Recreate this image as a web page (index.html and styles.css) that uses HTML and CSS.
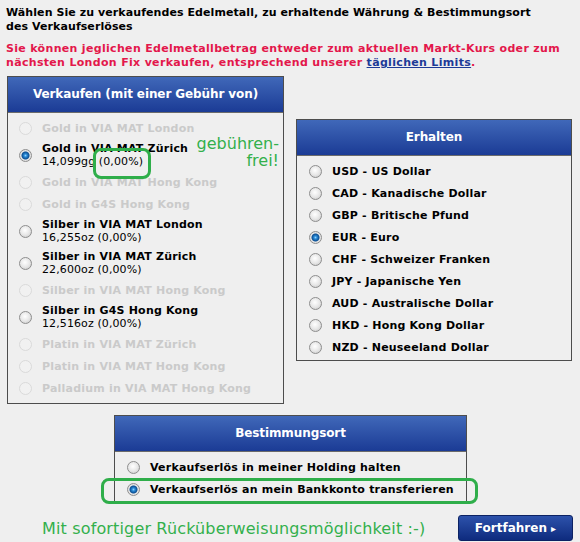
FILE: index.html
```html
<!DOCTYPE html>
<html lang="de">
<head>
<meta charset="UTF-8">
<meta name="viewport" content="width=device-width, initial-scale=1.0">
<title>Verkaufen</title>
<link rel="stylesheet" href="styles.css">
</head>
<body>
    <div class="page">
        <h1 class="intro">Wählen Sie zu verkaufendes Edelmetall, zu erhaltende Währung &amp; Bestimmungsort<br>des Verkaufserlöses</h1>
        <p class="warn">Sie können jeglichen Edelmetallbetrag entweder zum aktuellen Markt-Kurs oder zum<br>nächsten London Fix verkaufen, entsprechend unserer <a href="#">täglichen Limits</a>.</p>

        <div class="columns">
            <div class="box box_metal">
                <h2 class="box_head">Verkaufen (mit einer Gebühr von)</h2>
                <ul class="options">
                    <li class="off"><input type="radio" name="metal" disabled><label>Gold in VIA MAT London</label></li>
                    <li><input type="radio" name="metal" id="m2" checked><label for="m2">Gold in VIA MAT Zürich<span class="amount">14,099gg (0,00%)</span></label></li>
                    <li class="off"><input type="radio" name="metal" disabled><label>Gold in VIA MAT Hong Kong</label></li>
                    <li class="off"><input type="radio" name="metal" disabled><label>Gold in G4S Hong Kong</label></li>
                    <li><input type="radio" name="metal" id="m5"><label for="m5">Silber in VIA MAT London<span class="amount">16,255oz (0,00%)</span></label></li>
                    <li><input type="radio" name="metal" id="m6"><label for="m6">Silber in VIA MAT Zürich<span class="amount">22,600oz (0,00%)</span></label></li>
                    <li class="off"><input type="radio" name="metal" disabled><label>Silber in VIA MAT Hong Kong</label></li>
                    <li><input type="radio" name="metal" id="m8"><label for="m8">Silber in G4S Hong Kong<span class="amount">12,516oz (0,00%)</span></label></li>
                    <li class="off"><input type="radio" name="metal" disabled><label>Platin in VIA MAT Zürich</label></li>
                    <li class="off"><input type="radio" name="metal" disabled><label>Platin in VIA MAT Hong Kong</label></li>
                    <li class="off"><input type="radio" name="metal" disabled><label>Palladium in VIA MAT Hong Kong</label></li>
                </ul>
                <div class="note_free">gebühren-<br>frei!</div>
                <div class="ring ring_fee"></div>
            </div>

            <div class="box box_currency">
                <h2 class="box_head">Erhalten</h2>
                <ul class="options">
                    <li><input type="radio" name="cur" id="c1"><label for="c1">USD - US Dollar</label></li>
                    <li><input type="radio" name="cur" id="c2"><label for="c2">CAD - Kanadische Dollar</label></li>
                    <li><input type="radio" name="cur" id="c3"><label for="c3">GBP - Britische Pfund</label></li>
                    <li><input type="radio" name="cur" id="c4" checked><label for="c4">EUR - Euro</label></li>
                    <li><input type="radio" name="cur" id="c5"><label for="c5">CHF - Schweizer Franken</label></li>
                    <li><input type="radio" name="cur" id="c6"><label for="c6">JPY - Japanische Yen</label></li>
                    <li><input type="radio" name="cur" id="c7"><label for="c7">AUD - Australische Dollar</label></li>
                    <li><input type="radio" name="cur" id="c8"><label for="c8">HKD - Hong Kong Dollar</label></li>
                    <li><input type="radio" name="cur" id="c9"><label for="c9">NZD - Neuseeland Dollar</label></li>
                </ul>
            </div>
        </div>

        <div class="box box_dest">
            <h2 class="box_head">Bestimmungsort</h2>
            <ul class="options">
                <li><input type="radio" name="dest" id="d1"><label for="d1">Verkaufserlös in meiner Holding halten</label></li>
                <li><input type="radio" name="dest" id="d2" checked><label for="d2">Verkaufserlös an mein Bankkonto transferieren</label></li>
            </ul>
            <div class="ring ring_bank"></div>
        </div>

        <div class="footer">
            <p class="note_refund">Mit sofortiger Rücküberweisungsmöglichkeit :-)</p>
            <button type="button" class="btn_next">Fortfahren <span class="arrow">&#9656;</span></button>
        </div>
    </div>
</body>
</html>
```

FILE: styles.css
```css
*,
*::before,
*::after {
    box-sizing: border-box;
}
body {
    margin: 0;
    background: #efefef;
    font-family: Verdana, "DejaVu Sans", sans-serif;
    font-size: 11px;
    color: #000;
}
.page {
    width: 580px;
    padding: 6px 8px 0 7px;
}

.intro {
    margin: 0 0 0 -1px;
    font-size: 11px;
    line-height: 14px;
    letter-spacing: .08px;
}
.warn {
    margin: 8px 0 0 -1px;
    font-weight: bold;
    line-height: 14px;
    letter-spacing: .32px;
    color: #e3174b;
}
.warn a {
    color: #1d3a97;
}

.columns {
    display: flex;
    align-items: flex-start;
    gap: 12px;
    margin-top: 6px;
}

/* boxes */
.box {
    position: relative;
    border: 1px solid #4d4d4d;
}
.box_metal {
    width: 278px;
}
.box_currency {
    width: 277px;
    margin-top: 43px;
}
.box_dest {
    width: 353px;
    margin: 11px 0 0 107px;
}
.box_head {
    margin: 0;
    height: 36px;
    line-height: 35px;
    border-bottom: 1px solid #6b6b6b;
    background: linear-gradient(#4068b9, #1b3b95);
    color: #fff;
    font-size: 12px;
    letter-spacing: -.1px;
    text-align: center;
}

.options {
    list-style: none;
    margin: 0;
    padding: 4px 0 2px;
}
.box_metal .options {
    padding-bottom: 4px;
}
.options li {
    display: flex;
    align-items: center;
    min-height: 22px;
    padding: 3px 0;
}
.options label {
    font-weight: bold;
    line-height: 13px;
    letter-spacing: .2px;
}
.options li.off label {
    color: #cacaca;
}
.amount {
    display: block;
    font-weight: normal;
    letter-spacing: .1px;
}

/* radios */
.options input {
    appearance: none;
    -webkit-appearance: none;
    flex: none;
    width: 13px;
    height: 13px;
    margin: 0 10px 0 11px;
    border: 1px solid #8e8e8e;
    border-radius: 50%;
    background: radial-gradient(circle at 45% 40%, #fff 0, #e8e8e8 50%, #c4c4c4 100%);
}
.box_currency .options input,
.box_dest .options input {
    margin-left: 12px;
}
.options input:checked {
    background: radial-gradient(circle, #8fd3ff 0, #2a8ad6 1.5px, #0c4f93 3.5px, #e6e6e6 4.5px, #d0d0d0 100%);
}
.options input:disabled {
    border-color: #dadada;
    background: #f1f1f1;
}

/* green annotations */
.note_free {
    position: absolute;
    right: 4px;
    top: 58px;
    color: #33b04c;
    font-size: 16px;
    line-height: 17px;
    text-align: right;
}
.ring {
    position: absolute;
    border: 3px solid #2fae4a;
    border-radius: 8px;
}
.ring_fee {
    left: 85px;
    top: 71px;
    width: 58px;
    height: 31px;
}
.ring_bank {
    left: -14px;
    top: 62px;
    width: 377px;
    height: 26px;
}

.footer {
    display: flex;
    align-items: center;
    justify-content: space-between;
    margin-top: 12px;
}
.note_refund {
    margin: 0 0 0 35px;
    color: #33b04c;
    font-size: 16px;
    letter-spacing: .15px;
}
.btn_next {
    width: 115px;
    height: 26px;
    margin-right: -1px;
    border: 1px solid #0c2263;
    border-radius: 3px;
    background: linear-gradient(#2d52ab, #0e2b7e);
    color: #fff;
    font-family: Verdana, "DejaVu Sans", sans-serif;
    font-size: 12px;
    font-weight: bold;
}
.arrow {
    font-size: 10px;
}
```
